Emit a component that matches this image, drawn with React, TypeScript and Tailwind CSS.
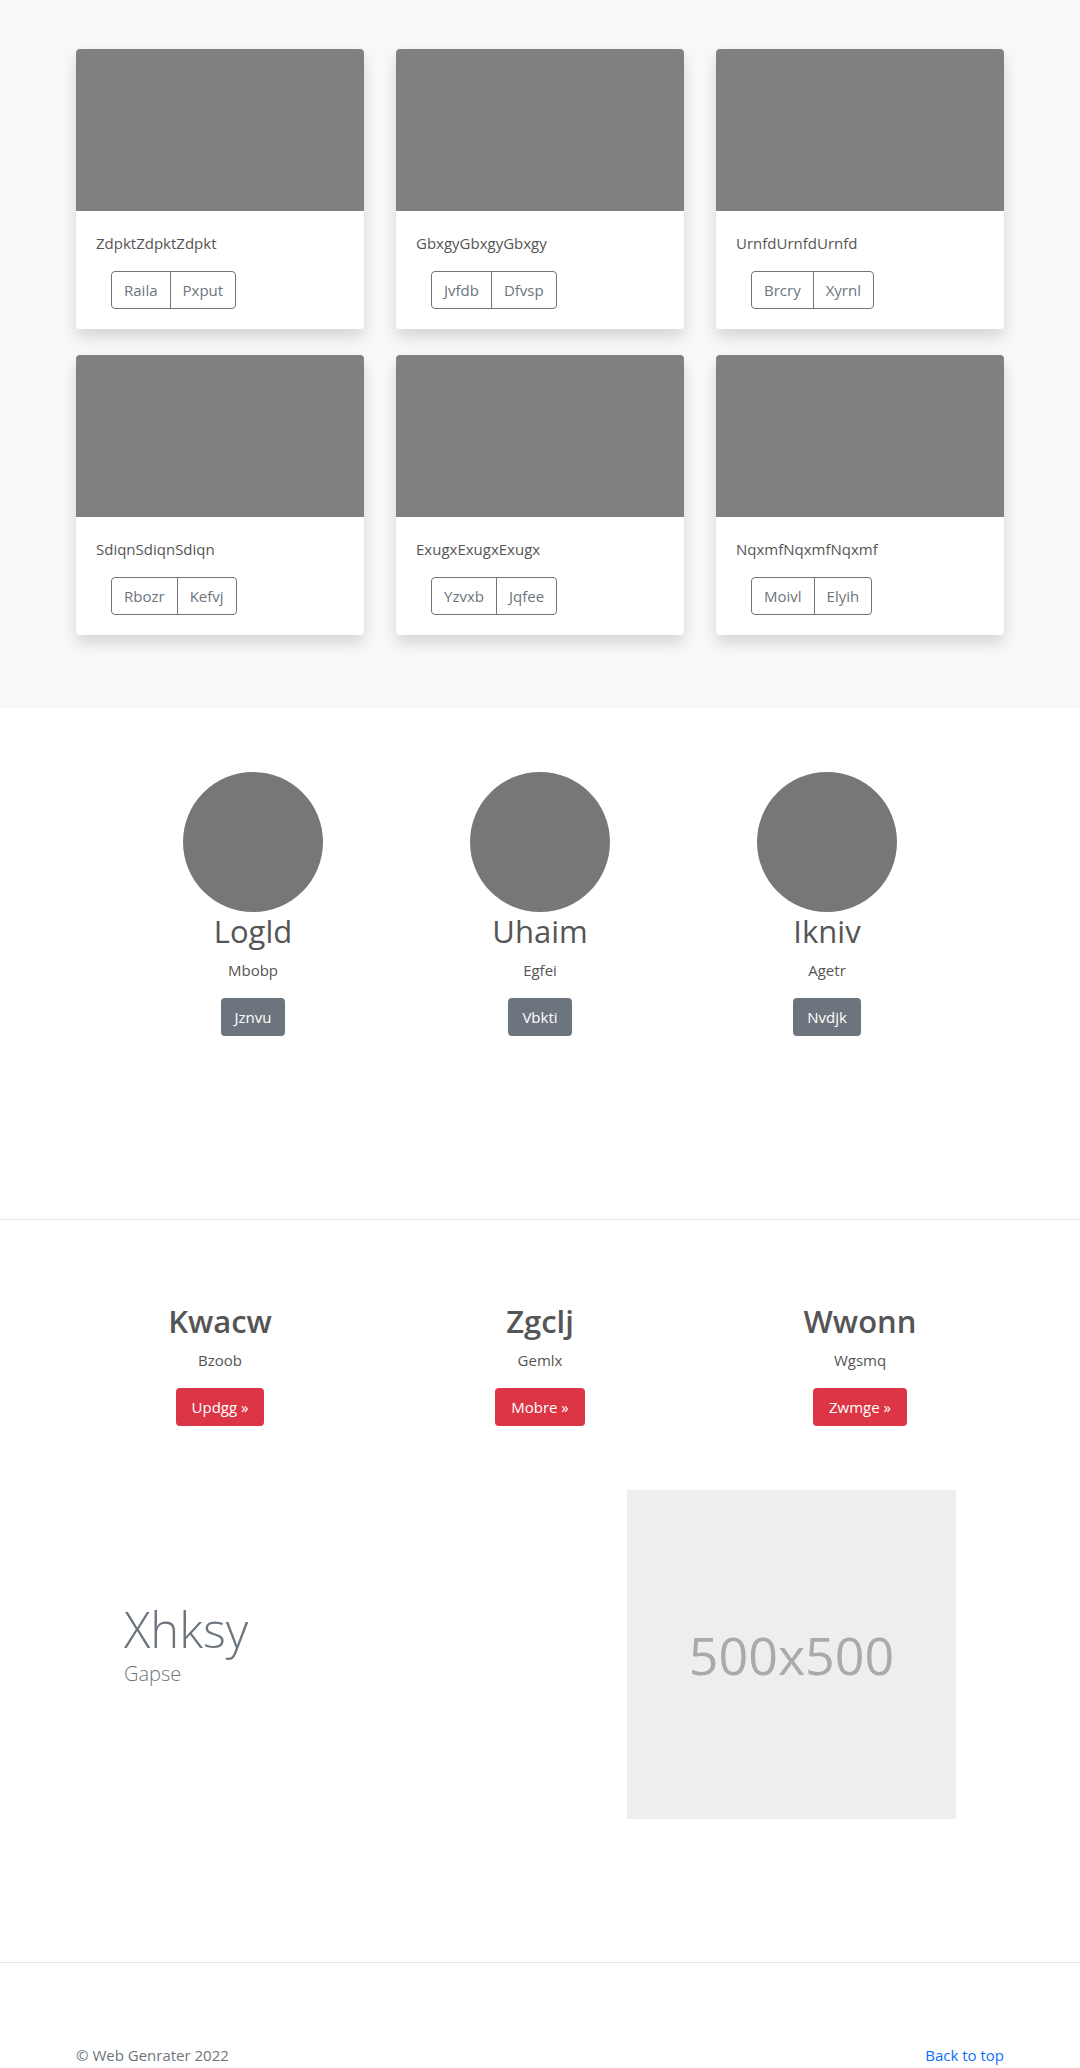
import React from "react";

const cards = [
  { title: "ZdpktZdpktZdpkt", actions: ["Raila", "Pxput"] },
  { title: "GbxgyGbxgyGbxgy", actions: ["Jvfdb", "Dfvsp"] },
  { title: "UrnfdUrnfdUrnfd", actions: ["Brcry", "Xyrnl"] },
  { title: "SdiqnSdiqnSdiqn", actions: ["Rbozr", "Kefvj"] },
  { title: "ExugxExugxExugx", actions: ["Yzvxb", "Jqfee"] },
  { title: "NqxmfNqxmfNqxmf", actions: ["Moivl", "Elyih"] },
];

const people = [
  { name: "Logld", role: "Mbobp", cta: "Jznvu" },
  { name: "Uhaim", role: "Egfei", cta: "Vbkti" },
  { name: "Ikniv", role: "Agetr", cta: "Nvdjk" },
];

const features = [
  { title: "Kwacw", text: "Bzoob", cta: "Updgg" },
  { title: "Zgclj", text: "Gemlx", cta: "Mobre" },
  { title: "Wwonn", text: "Wgsmq", cta: "Zwmge" },
];

export default function App() {
  return (
    <div className="min-h-[2068px] bg-white font-['Open_Sans','Noto_Sans',sans-serif] text-[16px] leading-6 text-[#555]">
      {/* album cards */}
      <section className="bg-[#f8f9fa] pt-[49px] pb-[73px]">
        <div className="mx-auto grid max-w-[928px] grid-cols-3 gap-x-8 gap-y-[26px]">
          {cards.map((c) => (
            <div
              key={c.title}
              className="overflow-hidden rounded bg-white shadow-[0_8px_16px_rgba(0,0,0,0.15)]"
            >
              <div className="h-[162px] w-full bg-[#808080]" />
              <div className="px-5 pt-5 pb-5">
                <p className="mb-4 text-[15px]">{c.title}</p>
                <div className="ml-[15px] inline-flex h-[38px] overflow-hidden rounded border border-[#6c757d] text-[15px] text-[#6c757d]">
                  {c.actions.map((a, i) => (
                    <button
                      key={a}
                      className={i === 0 ? "px-3 border-r border-[#6c757d]" : "px-3"}
                    >
                      {a}
                    </button>
                  ))}
                </div>
              </div>
            </div>
          ))}
        </div>
      </section>

      {/* team circles */}
      <section className="h-[512px] border-b border-[#e5e5e5] pt-16">
        <div className="mx-auto grid max-w-[861px] grid-cols-3">
          {people.map((p) => (
            <div key={p.name} className="flex flex-col items-center text-center">
              <div className="h-[140px] w-[140px] rounded-full bg-[#777]" />
              <h2 className="mt-[1px] mb-2 text-[31px] leading-[37px] font-normal text-[#555]">{p.name}</h2>
              <p className="mb-4 text-[15px]">{p.role}</p>
              <button className="h-[38px] rounded bg-[#6c757d] px-[14px] text-[15px] text-white">
                {p.cta}
              </button>
            </div>
          ))}
        </div>
      </section>

      {/* marketing */}
      <section className="pt-[83px]">
        <div className="mx-auto grid max-w-[960px] grid-cols-3">
          {features.map((f) => (
            <div key={f.title} className="flex flex-col items-center text-center">
              <h2 className="mb-2 text-[31px] leading-[37px] font-semibold text-[#555]">{f.title}</h2>
              <p className="mb-4 text-[15px]">{f.text}</p>
              <button className="h-[38px] rounded bg-[#dc3545] px-4 text-[15px] text-white">
                {f.cta} »
              </button>
            </div>
          ))}
        </div>

        <div className="mx-auto mt-16 flex max-w-[960px] items-center justify-between px-16">
          <div className="pb-[22px]">
            <h1 className="text-[49px] leading-[60px] font-light text-[#6c757d]">Xhksy</h1>
            <p className="text-[20px] leading-[30px] font-light text-[#6c757d]">Gapse</p>
          </div>
          <div className="flex h-[329px] w-[329px] items-center justify-center bg-[#eee] text-[52px] text-[#aaa]">
            500x500
          </div>
        </div>
      </section>

      {/* footer */}
      <footer className="mt-[143px] border-t border-[#e5e5e5] pt-[81px]">
        <div className="mx-auto flex max-w-[928px] items-center justify-between text-[15px] leading-[22px] text-[#6c757d]">
          <p>© Web Genrater 2022</p>
          <a href="#" className="text-[#0d6efd]">
            Back to top
          </a>
        </div>
      </footer>
    </div>
  );
}
